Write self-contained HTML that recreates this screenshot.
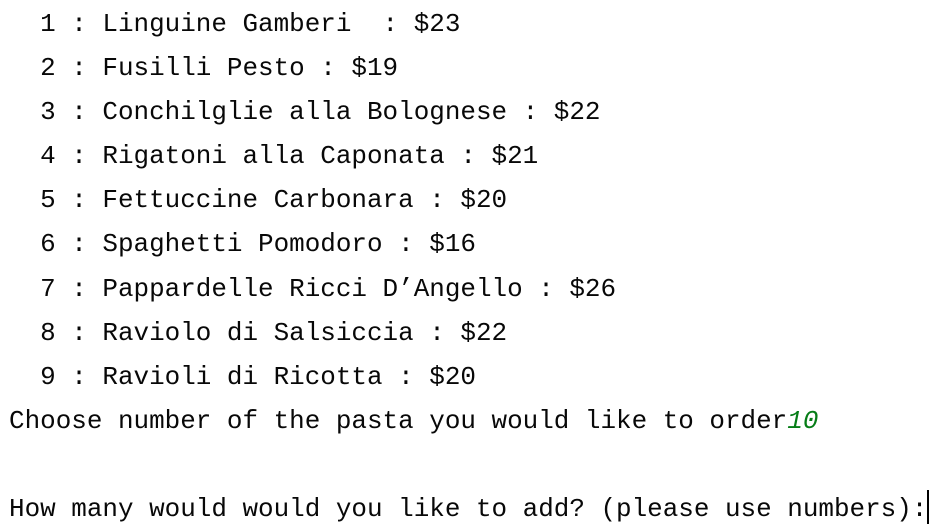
<!DOCTYPE html>
<html><head><style>
html,body{margin:0;padding:0;background:#fff;width:949px;height:527px;overflow:hidden}
pre{margin:0;position:absolute;left:9px;top:2px;font-family:"Liberation Mono",monospace;font-size:25.95px;line-height:44.1px;color:#080808}
.g{color:#067d17;font-style:italic}
.c{display:inline-block;width:2px;height:34px;background:#000;vertical-align:-8px}
</style></head><body>
<pre>  1 : Linguine Gamberi  : $23
  2 : Fusilli Pesto : $19
  3 : Conchilglie alla Bolognese : $22
  4 : Rigatoni alla Caponata : $21
  5 : Fettuccine Carbonara : $20
  6 : Spaghetti Pomodoro : $16
  7 : Pappardelle Ricci D’Angello : $26
  8 : Raviolo di Salsiccia : $22
  9 : Ravioli di Ricotta : $20
Choose number of the pasta you would like to order<span class="g">10</span>

How many would would you like to add? (please use numbers):<span class="c"></span></pre>
</body></html>
